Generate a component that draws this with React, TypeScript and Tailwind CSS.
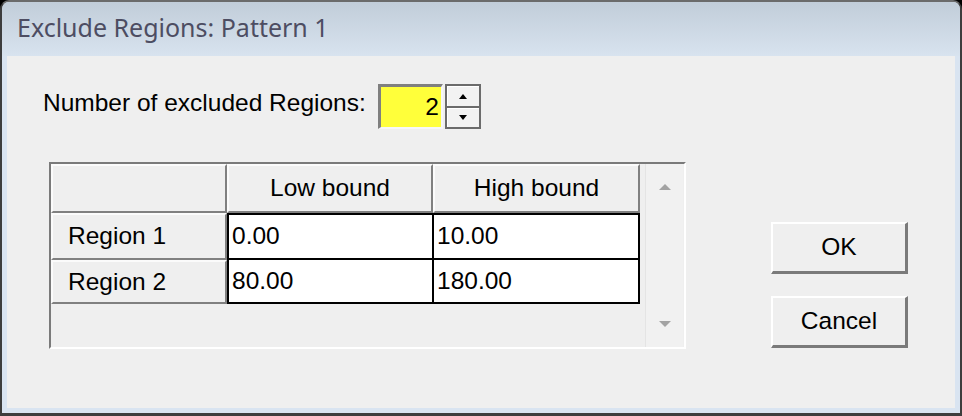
import React from "react";

const ui = { fontFamily: '"Liberation Sans", Arial, sans-serif' };

/** raised 3d cell like the old grid headers */
function HeadCell({ children, center }: { children?: React.ReactNode; center?: boolean }) {
  return (
    <div
      className={
        "flex items-center h-full bg-[#efefef] border-t-2 border-l-2 border-t-[#fbfbfb] border-l-[#fbfbfb] border-b-2 border-r-2 border-b-[#808080] border-r-[#808080] " +
        (center ? "justify-center" : "pl-[15px]")
      }
    >
      {children}
    </div>
  );
}

function DataCell({ children }: { children: React.ReactNode }) {
  return <div className="flex items-center bg-white pl-[3px] h-full">{children}</div>;
}

export default function App() {
  return (
    <div className="w-[962px] h-[416px] bg-black text-[24.5px] text-black" style={ui}>
      <div className="w-full h-full flex flex-col rounded-t-[9px] bg-[#d9e4f1] border-2 border-t-[#6b6b6b] border-[#3d3d3d] border-b-[3px] overflow-hidden">
        {/* title bar */}
        <div className="h-[54px] shrink-0 flex items-center pl-[15px] pb-[2px] bg-gradient-to-b from-[#c1cdd9] to-[#d8e3ef]">
          <span
            className="text-[25px] text-[#4d4d62]"
            style={{ fontFamily: '"Noto Sans", "Open Sans", sans-serif' }}
          >
            Exclude Regions: Pattern 1
          </span>
        </div>

        {/* body */}
        <div className="flex-1 mx-[5px] mb-[5px] bg-[#efefef] flex">
          <div className="flex flex-col pl-[36px] pt-[28px]">
            <div className="flex items-center">
              <span className="mr-[12px] -mt-[7px]">Number of excluded Regions:</span>
              <div className="w-[65px] h-[45px] bg-[#ffff3a] border-t-[3px] border-l-[3px] border-t-[#7f7f7f] border-l-[#7f7f7f] border-b-2 border-r-2 border-b-[#f7f7f7] border-r-[#f7f7f7] flex items-center justify-end pr-[2px]">
                2
              </div>
              <div className="ml-[2px] w-[36px] h-[45px] bg-[#6b6b6b] p-[2px] flex flex-col gap-[2px]">
                <div className="flex-1 bg-[#f2f2f2] border-t border-l border-white flex items-center justify-center">
                  <svg width="8" height="5" viewBox="0 0 8 5"><path d="M4 0 L8 5 L0 5 Z" fill="#000" /></svg>
                </div>
                <div className="flex-1 bg-[#f2f2f2] border-t border-l border-white flex items-center justify-center">
                  <svg width="8" height="5" viewBox="0 0 8 5"><path d="M0 0 L8 0 L4 5 Z" fill="#000" /></svg>
                </div>
              </div>
            </div>

            {/* grid */}
            <div className="mt-[33px] ml-[6px] w-[637px] h-[187px] border-2 border-t-[#7a7a7a] border-l-[#7a7a7a] border-b-white border-r-white bg-[#efefef] flex">
              <div className="flex flex-col">
                <div className="grid grid-cols-[176px_206px_207px] h-[49px]">
                  <HeadCell />
                  <HeadCell center>Low bound</HeadCell>
                  <HeadCell center>High bound</HeadCell>
                </div>
                <div className="flex">
                  <div className="flex flex-col w-[176px]">
                    <div className="h-[47px]">
                      <HeadCell>Region 1</HeadCell>
                    </div>
                    <div className="h-[44px]">
                      <HeadCell>Region 2</HeadCell>
                    </div>
                  </div>
                  <div className="grid grid-cols-[203px_204px] grid-rows-[43px_42px] gap-[2px] bg-black border-2 border-black w-[413px] h-[91px]">
                    <DataCell>0.00</DataCell>
                    <DataCell>10.00</DataCell>
                    <DataCell>80.00</DataCell>
                    <DataCell>180.00</DataCell>
                  </div>
                </div>
              </div>
              {/* scrollbar */}
              <div className="ml-[5px] w-[38px] h-full bg-[#f1f1f1] border-l border-[#e4e4e4] flex flex-col items-center justify-between py-[20px]">
                <svg width="12" height="6" viewBox="0 0 12 6"><path d="M6 0 L12 6 L0 6 Z" fill="#a3a3a3" /></svg>
                <svg width="12" height="6" viewBox="0 0 12 6"><path d="M0 0 L12 0 L6 6 Z" fill="#a3a3a3" /></svg>
              </div>
            </div>
          </div>

          {/* buttons */}
          <div className="ml-auto mr-[47px] pt-[166px] flex flex-col gap-[22px]">
            <button className="w-[137px] h-[52px] bg-[#efefef] border-t-2 border-l-2 border-t-white border-l-white border-b-[3px] border-r-[3px] border-b-[#7a7a7a] border-r-[#7a7a7a] flex items-center justify-center">
              OK
            </button>
            <button className="w-[137px] h-[52px] bg-[#efefef] border-t-2 border-l-2 border-t-white border-l-white border-b-[3px] border-r-[3px] border-b-[#7a7a7a] border-r-[#7a7a7a] flex items-center justify-center">
              Cancel
            </button>
          </div>
        </div>
      </div>
    </div>
  );
}
